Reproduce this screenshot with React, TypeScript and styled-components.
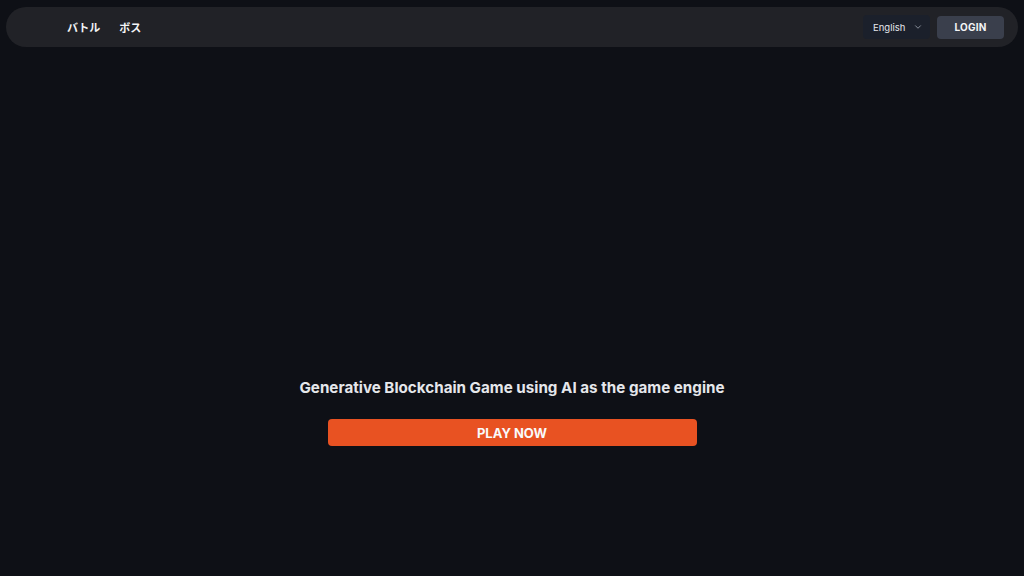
import React from "react";
import styled, { createGlobalStyle } from "styled-components";

const Global = createGlobalStyle`
  html, body { margin: 0; padding: 0; background: #0e1016; }
  body { font-family: Inter, "Noto Sans CJK JP", sans-serif; color: #e5e7eb; }
  #root { min-height: 576px; }
`;

const Page = styled.div`
  width: 1024px;
  height: 576px;
  box-sizing: border-box;
  padding: 7px 6px 0 6px;
  display: flex;
  flex-direction: column;
  background: #0e1016;
`;

const Header = styled.header`
  height: 40px;
  border-radius: 20px;
  background: #212227;
  display: flex;
  align-items: center;
  justify-content: space-between;
  padding: 0 14px 0 61px;
`;

const Nav = styled.nav`
  display: flex;
  gap: 19px;
`;

const NavLink = styled.a`
  font-family: "Noto Sans CJK JP", Inter, sans-serif;
  font-size: 11px;
  font-weight: 700;
  color: #f3f4f6;
  text-decoration: none;
`;

const Right = styled.div`
  display: flex;
  align-items: center;
  gap: 7px;
`;

const Select = styled.div`
  height: 24px;
  width: 67px;
  box-sizing: border-box;
  border-radius: 4px;
  background: #1b202b;
  display: flex;
  align-items: center;
  padding: 0 7px 0 10px;
  justify-content: space-between;
  font-size: 9.5px;
  color: #e5e7eb;
`;

const LoginButton = styled.button`
  height: 23px;
  width: 67px;
  border: none;
  border-radius: 4px;
  background: #3a3f4c;
  color: #f3f4f6;
  font-family: Inter, sans-serif;
  font-size: 10px;
  font-weight: 700;
  letter-spacing: 0.2px;
`;

const Hero = styled.main`
  flex: 1;
  display: flex;
  flex-direction: column;
  align-items: center;
  padding-top: 330px;
  margin-left: -6px;
  margin-right: -6px;
`;

const Title = styled.h1`
  margin: 0;
  font-family: Inter, sans-serif;
  font-size: 15.2px;
  font-weight: 700;
  color: #e5e7eb;
  line-height: 22px;
`;

const PlayButton = styled.button`
  margin-top: 20px;
  width: 369px;
  height: 27px;
  border: none;
  border-radius: 4px;
  background: #e85222;
  color: #f9fafb;
  font-family: Inter, sans-serif;
  font-size: 13px;
  font-weight: 700;
`;

export default function App() {
  return (
    <>
      <Global />
      <Page>
        <Header>
          <Nav>
            <NavLink>バトル</NavLink>
            <NavLink>ボス</NavLink>
          </Nav>
          <Right>
            <Select>
              <span>English</span>
              <svg width="10" height="10" viewBox="0 0 24 24" fill="none" stroke="#9ca3af" strokeWidth="2" strokeLinecap="round" strokeLinejoin="round">
                <path d="M6 9l6 6 6-6" />
              </svg>
            </Select>
            <LoginButton>LOGIN</LoginButton>
          </Right>
        </Header>
        <Hero>
          <Title>Generative Blockchain Game using AI as the game engine</Title>
          <PlayButton>PLAY NOW</PlayButton>
        </Hero>
      </Page>
    </>
  );
}
